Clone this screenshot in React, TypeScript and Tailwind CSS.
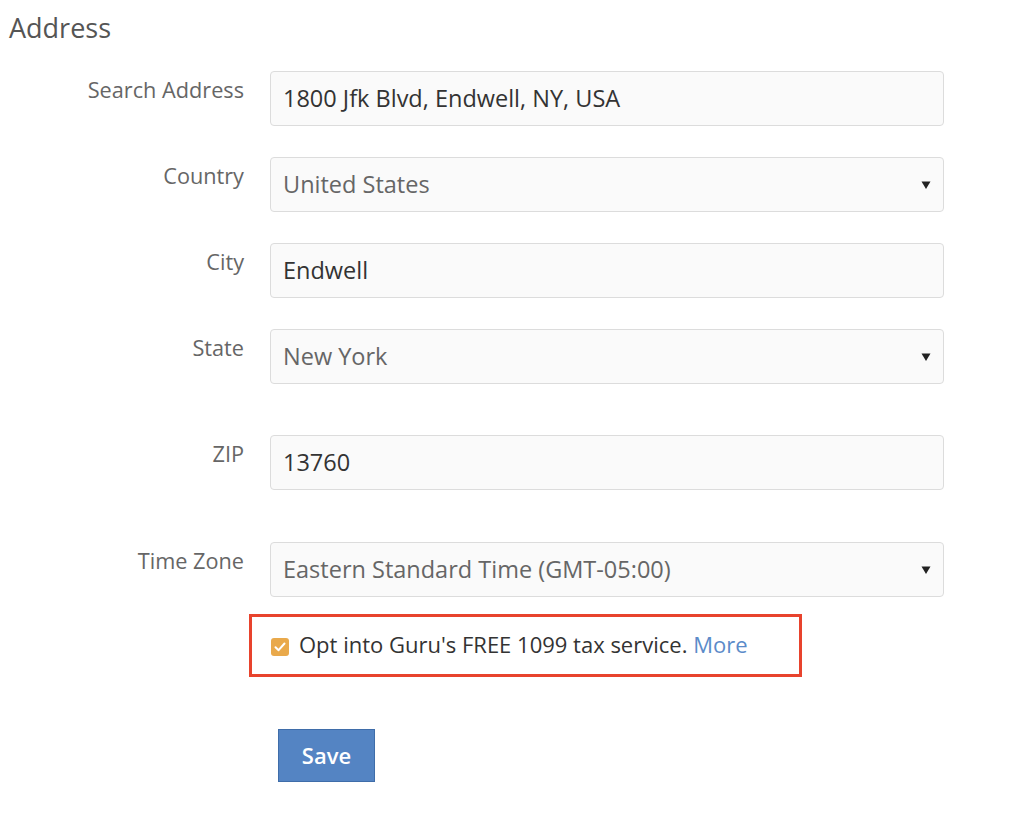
import React from 'react';

const font = { fontFamily: '"Open Sans", "Noto Sans", sans-serif' };

function Caret() {
  return (
    <svg width="10" height="10" viewBox="0 0 10 10" className="shrink-0">
      <path d="M0.5 1.5 H9.5 L5 9 Z" fill="#222" />
    </svg>
  );
}

function Row({ label, value, select, muted, className }: { label: string; value: string; select?: boolean; muted?: boolean; className: string }) {
  return (
    <div className={`flex ${className}`}>
      <div className="w-[244px] pt-[5px] text-right text-[21.7px] leading-[27px] text-[#666]">{label}</div>
      <div className="ml-[26px] flex h-[55px] w-[674px] items-center justify-between rounded-[4px] border border-[#dcdcdc] bg-[#fafafa] pl-[12px] pr-[12px]">
        <span className={`mt-[1px] text-[23.5px] ${muted ? 'text-[#666]' : 'text-[#333]'}`}>{value}</span>
        {select && <Caret />}
      </div>
    </div>
  );
}

export default function App() {
  return (
    <div className="min-h-screen w-[1024px] bg-white" style={font}>
      <h1 className="pl-[9px] pt-[10px] text-[27px] leading-[36px] text-[#555]">Address</h1>
      <div className="mt-[25px]">
        <Row label="Search Address" value="1800 Jfk Blvd, Endwell, NY, USA" className="mb-[31px]" />
        <Row label="Country" value="United States" select muted className="mb-[31px]" />
        <Row label="City" value="Endwell" className="mb-[31px]" />
        <Row label="State" value="New York" select muted className="mb-[51px]" />
        <Row label="ZIP" value="13760" className="mb-[52px]" />
        <Row label="Time Zone" value="Eastern Standard Time (GMT-05:00)" select muted className="" />
      </div>
      <div className="ml-[249px] mt-[17px] flex h-[63px] w-[553px] items-center border-[3px] border-[#e8432d] pl-[19px]">
        <span className="mt-[3px] flex h-[18px] w-[18px] items-center justify-center rounded-[3px] bg-[#e9a94b]">
          <svg width="12" height="10" viewBox="0 0 12 10">
            <path d="M1.5 5.2 L4.6 8.2 L10.5 1.5" fill="none" stroke="#fff" strokeWidth="2" strokeLinecap="round" strokeLinejoin="round" />
          </svg>
        </span>
        <span className="ml-[10px] -mt-[3px] text-[22px] text-[#333]">
          Opt into Guru's FREE 1099 tax service. <span className="text-[#5b8bc9]">More</span>
        </span>
      </div>
      <button className="ml-[278px] mt-[52px] h-[53px] w-[97px] border border-[#3f6da9] bg-[#5484c3] text-[22px] font-semibold text-white">
        Save
      </button>
    </div>
  );
}
